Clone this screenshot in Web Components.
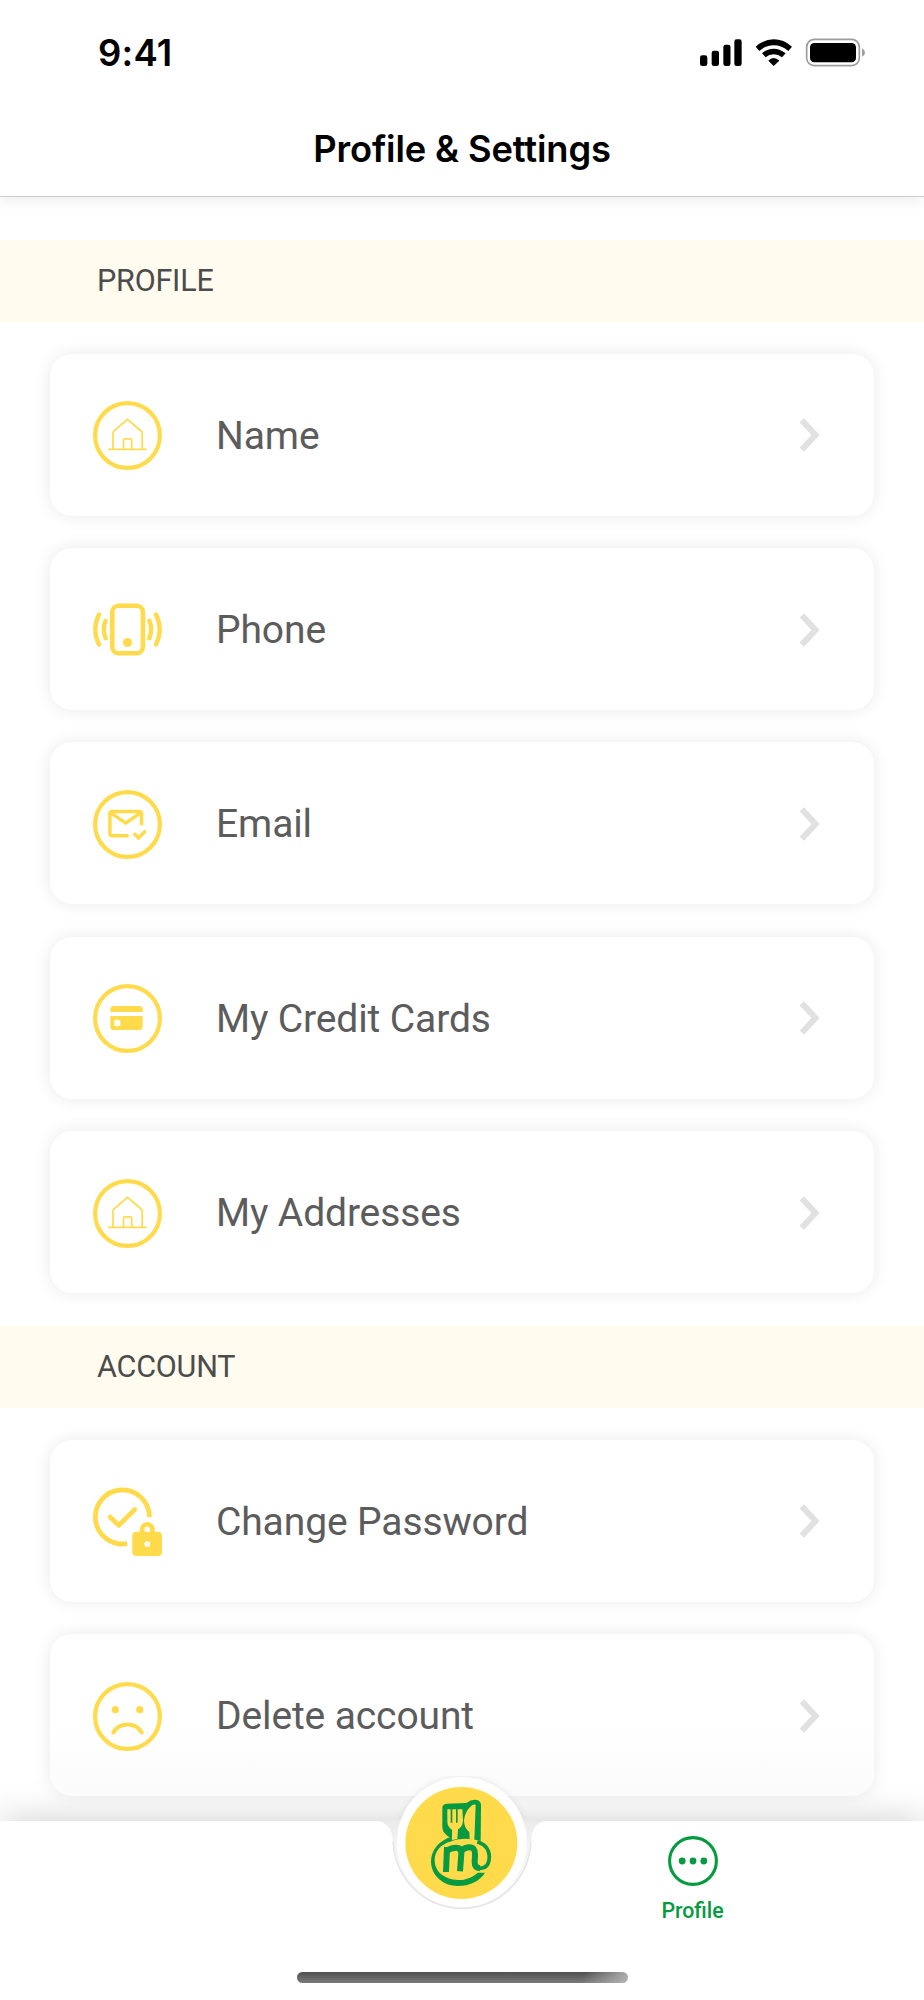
<!DOCTYPE html>
<html lang="en">
<head>
<meta charset="utf-8">
<title>Profile &amp; Settings</title>
<style>
html,body{margin:0;padding:0;background:#fff}
body{width:924px;height:2000px;overflow:hidden;font-family:Roboto,"Liberation Sans",sans-serif}
</style>
</head>
<body>
<settings-screen></settings-screen>
<script>
const define = (name, html, setup) => customElements.define(name, class extends HTMLElement {
  constructor() {
    super();
    this.attachShadow({ mode: 'open' });
    const t = document.createElement('template');
    t.innerHTML = html;
    this.shadowRoot.append(t.content.cloneNode(true));
  }
  connectedCallback() { if (setup) setup(this, this.shadowRoot); }
});

const ring = '<circle cx="34.5" cy="34.5" r="32.4" stroke-width="4.2"/>';
const icons = {
  home: ring + '<path stroke-width="1.7" stroke-linecap="round" stroke-linejoin="round" d="M16 48.4H53M20 48V32Q20 31 21 30L34.5 18.3L48 30Q49.2 31 49.2 32V48M30.5 48V39.5Q30.5 37.8 32.2 37.8H37Q38.7 37.8 38.7 39.5V48"/>',
  phone: '<rect x="19.3" y="10.8" width="30.6" height="47.4" rx="6.3" stroke-width="4.6"/><circle cx="34.5" cy="47.5" r="4.5" fill="currentColor" stroke="none"/><path stroke-width="4.4" stroke-linecap="round" d="M6 19.5Q-1.4 34.5 6 49.5M12.7 25.7Q8.8 34.5 12.7 43.3M63 19.5Q70.4 34.5 63 49.5M56.3 25.7Q60.2 34.5 56.3 43.3"/>',
  mail: ring + '<path stroke-width="3.5" stroke-linejoin="round" d="M48.5 35.2V23.7Q48.5 21.4 46.2 21.4H19.2Q16.9 21.4 16.9 23.7V43.5Q16.9 45.8 19.2 45.8H35.7M17.5 22.6L32.7 33.1L47.9 22.6"/><path stroke-width="3.5" d="M40.8 43.3L45.5 48L52.7 40.8"/>',
  card: ring + '<path fill="currentColor" stroke="none" fill-rule="evenodd" d="M17.3 28.1V25.8Q17.3 22.1 21 22.1H46Q49.7 22.1 49.7 25.8V28.1ZM17.3 32.1H49.7V42.4Q49.7 46.1 46 46.1H21Q17.3 46.1 17.3 42.4ZM23 35.8Q21.2 35.8 21.2 37.6V40.4Q21.2 42.2 23 42.2H25.6Q27.4 42.2 27.4 40.4V37.6Q27.4 35.8 25.6 35.8Z"/>',
  password: '<path stroke-width="4.8" d="M56.4 30A27 27 0 1 0 34.3 56.5"/><path stroke-width="4.8" stroke-linecap="round" stroke-linejoin="round" d="M17.1 30L25.7 38.4L41.7 22.6"/><path fill="currentColor" stroke="none" fill-rule="evenodd" d="M43.5 44.7H46.8V42.6A7.5 7.5 0 0 1 61.8 42.6V44.7H65Q69 44.7 69 48.7V65Q69 69 65 69H43.5Q39.3 69 39.3 65V48.7Q39.3 44.7 43.5 44.7ZM51.5 44.7H57.1V42.4A2.8 2.8 0 0 0 51.5 42.4ZM54.3 54.2A2.9 2.9 0 1 0 54.3 60A2.9 2.9 0 1 0 54.3 54.2Z"/>',
  sad: ring + '<g fill="currentColor" stroke="none"><circle cx="22.3" cy="27.7" r="3.6"/><circle cx="46.7" cy="27.7" r="3.6"/></g><path stroke-width="4" stroke-linecap="round" d="M20.3 50.6Q25 42.6 34.5 42.6T48.7 50.6"/>'
};

define('status-bar', `
<style>
:host{display:flex;justify-content:space-between;align-items:flex-start;height:105px;padding:0 57.300px 0 98px;box-sizing:border-box;font:600 36.500px/44px Inter,sans-serif;color:#000}
.time{margin-top:31px;letter-spacing:.2px}
svg{margin-top:36.7px;display:block}
</style>
<div class="time">9:41</div>
<svg width="166.67" height="30" viewBox="120 50 500 90">
  <rect x="120" y="105" width="22" height="32" rx="7"/><rect x="155" y="91" width="22" height="46" rx="7"/><rect x="190" y="73" width="21.500" height="64" rx="7"/><rect x="223" y="57" width="22" height="80" rx="7"/>
  <path d="M287 79Q311 57 341 57T396 79L385 92Q366 75 341 75T298 92ZM306 99Q321 85 341 85T377 99L366 111Q355 102 341 102T317 111ZM325 121Q332 113 341 113T358 121L341 137Z"/>
  <rect x="440" y="57" width="158" height="79" rx="23" fill="none" stroke="#9d9d9d" stroke-width="5"/>
  <rect x="450" y="68" width="138" height="58" rx="13"/><path fill="#9d9d9d" d="M606 84Q615 89 615 97T606 109Z"/>
</svg>`);

define('app-header', `
<style>
:host{display:block;height:196px;background:#fff;border-bottom:1.500px solid #cdcdcd;box-shadow:0 4px 14px rgba(0,0,0,.07);position:relative}
h1{margin:0;text-align:center;font:600 36.300px/44px Inter,sans-serif;letter-spacing:-.15px;color:#000;padding-top:22px}
</style>
<status-bar></status-bar><h1><slot></slot></h1>`);

define('section-title', `
<style>
:host{display:flex;align-items:center;height:82px;box-sizing:border-box;padding-left:97px;background:#fffbee;color:#4c4c4c;font-size:30.500px;letter-spacing:-.2px}
</style><span><slot></slot></span>`);

define('setting-row', `
<style>
:host{display:flex;align-items:center;height:162px;margin:0 50px;box-sizing:border-box;padding:1px 55px 0 43px;border-radius:22px;background:#fff;box-shadow:0 0 17px rgba(20,20,50,.085);color:#5c5c5c;font-size:39px;letter-spacing:-.12px;position:relative;z-index:1}
:host([fade]){background:linear-gradient(#fff 55%,#fbfbfb)}
.icon{width:69px;height:69px;color:#ffdb4c;fill:none;stroke:currentColor;overflow:visible;flex:none;margin-top:.6px}
.label{flex:1;margin-left:54px;line-height:50px;white-space:nowrap;padding-top:1px}
.chev{fill:none;stroke:#e1e1e1;stroke-width:6px}
</style>
<svg class="icon" viewBox="0 0 69 69"></svg>
<div class="label"><slot></slot></div>
<svg class="chev" width="19" height="34" viewBox="0 0 19 34"><path d="M1.800 2.300L15.500 17L1.800 31.700"/></svg>`,
(el, root) => { root.querySelector('.icon').innerHTML = icons[el.getAttribute('icon')]; });

define('setting-list', `
<style>:host{display:flex;flex-direction:column;gap:32.400px;padding:32.200px 0 32.400px}</style><slot></slot>`);

define('brand-button', `
<style>
:host{display:block;width:180px;height:160px}
svg{display:block;overflow:visible}
</style>
<svg width="180" height="160" viewBox="0 0 540 480">
  <defs>
    <filter id="s" x="-20%" y="-20%" width="140%" height="140%"><feGaussianBlur stdDeviation="9"/></filter>
    <linearGradient id="n" x1="0" y1="183" x2="0" y2="447" gradientUnits="userSpaceOnUse"><stop offset="0" stop-color="#ebebeb"/><stop offset=".3" stop-color="#f4f4f4"/><stop offset="1" stop-color="#f6f6f6"/></linearGradient>
  </defs>
  <path fill="url(#n)" d="M15 182Q64 185 68 240C72 360 165 447 276 447S480 360 484 240Q486 185 535 182Z"/>
  <path fill="none" stroke="#e4e4e4" stroke-width="4" d="M69 244C75 362 167 445 276 445S477 362 483 244"/>
  <circle cx="275.500" cy="244" r="196" fill="#000" opacity=".07" filter="url(#s)" clip-path="inset(0 0 262px 0)"/>
  <circle cx="275.500" cy="246" r="195" fill="#fff"/>
  <circle cx="274" cy="249" r="168" fill="#ffdb4c"/>
  <g fill="#069b40">
    <path d="M217 143Q217 132 230 131L289 129Q304 117 322 120Q334 124 333 139L332 243Q280 228 238 245L241 233Q218 220 217 203Z"/>
    <path d="M241 231C205 244 183 272 183 304C183 348 220 378 264 378C299 378 330 363 345 338H323C307 353 287 360 265 360C221 358 194 334 194 300C194 273 214 251 245 244Z"/>
  </g>
  <g fill="#ffdb4c">
    <path d="M232 148H242V188H247V148H258V188H263V148H277L279 181Q279 200 264 208L262 236Q254 238 246 241V209Q232 203 232 184Z"/>
    <path d="M317 134L313 242Q307 240 299 239L298 216Q281 202 282 179Q286 151 307 135Q313 132 317 134Z"/>
  </g>
  <g fill="none" stroke="#069b40">
    <path stroke-width="18" d="M228 336L231 261M270 334L274 280Q274 263 259 263Q242 263 230 273M274 272Q285 262 298 262Q316 262 315 283L314 307Q314 324 330 325"/>
    <path stroke-width="11" d="M322 245Q357 257 358 289Q358 325 330 325"/>
  </g>
</svg>`);

define('tab-item', `
<style>
:host{display:flex;flex-direction:column;align-items:center;color:#069b40;font-size:21.300px;font-weight:500;line-height:26px}
svg{display:block;margin-bottom:12px}
</style>
<svg width="50" height="50" viewBox="0 0 50 50"><circle cx="25" cy="25" r="23.400" fill="none" stroke="currentColor" stroke-width="3.100"/><g fill="currentColor"><circle cx="14.200" cy="25" r="3.400"/><circle cx="25" cy="25" r="3.400"/><circle cx="35.800" cy="25" r="3.400"/></g></svg>
<slot></slot>`);

define('tab-bar', `
<style>
:host{display:grid;grid-template-columns:1fr 1fr;align-content:space-between;height:179px;box-sizing:border-box;padding:15px 0 17px;background:#fff;box-shadow:0 -3px 34px rgba(0,0,0,.17);position:absolute;left:0;right:0;bottom:0;z-index:0}
tab-item{grid-column:2;margin-right:1px}
.home{grid-column:1/-1;justify-self:center;width:331px;height:11.500px;border-radius:6px;background:linear-gradient(115deg,transparent 86%,#b4b4b4),linear-gradient(#505050,#7b7b7b)}
</style>
<tab-item><slot></slot></tab-item>
<div class="home"></div>`);

define('settings-screen', `
<style>
:host{display:block;position:relative;width:924px;height:2000px;overflow:hidden;background:#fff}
main{padding-top:42.500px}
brand-button{position:absolute;left:370px;top:1760px;z-index:3}
</style>
<app-header>Profile &amp; Settings</app-header>
<main>
  <section-title>PROFILE</section-title>
  <setting-list>
    <setting-row icon="home">Name</setting-row>
    <setting-row icon="phone">Phone</setting-row>
    <setting-row icon="mail">Email</setting-row>
    <setting-row icon="card">My Credit Cards</setting-row>
    <setting-row icon="home">My Addresses</setting-row>
  </setting-list>
  <section-title>ACCOUNT</section-title>
  <setting-list>
    <setting-row icon="password">Change Password</setting-row>
    <setting-row icon="sad" fade>Delete account</setting-row>
  </setting-list>
</main>
<tab-bar>Profile</tab-bar>
<brand-button></brand-button>`);
</script>
</body>
</html>
